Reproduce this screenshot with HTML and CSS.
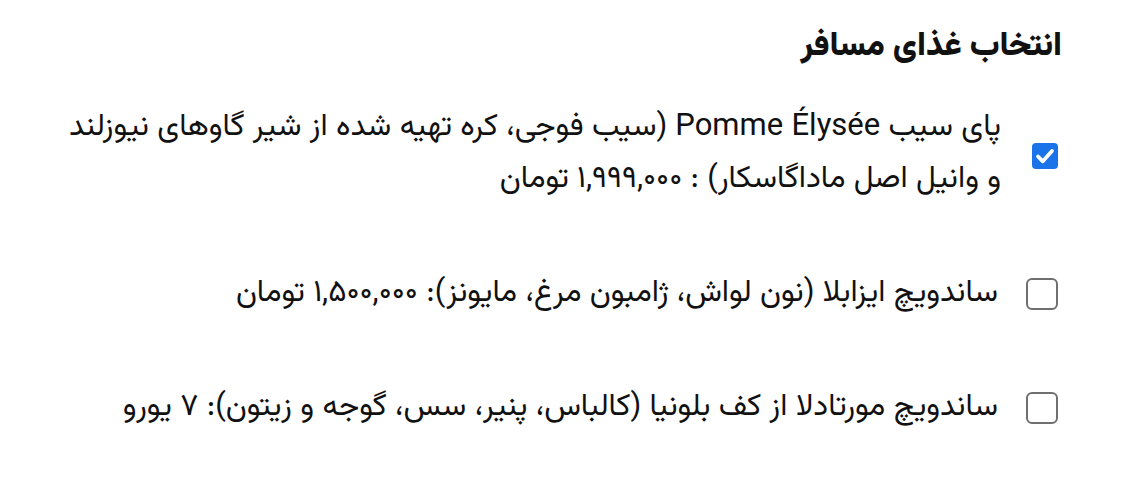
FILE: index.html
```html
<!DOCTYPE html>
<html lang="fa" dir="rtl">
<head>
<meta charset="utf-8">
<title>انتخاب غذای مسافر</title>
<link rel="stylesheet" href="styles.css">
</head>
<body>
<main class="page">
  <h1 class="title">انتخاب غذای مسافر</h1>
  <ul class="options">
    <li class="option">
      <span class="box box-checked">
        <svg viewBox="0 0 26 26" width="26" height="26"><path d="M6 13.5 L10.8 18.3 L20 8" fill="none" stroke="#fff" stroke-width="3.8" stroke-linecap="round" stroke-linejoin="round"/></svg>
      </span>
      <span class="label label-first">پای سیب Pomme Élysée (سیب فوجی، کره تهیه شده از شیر گاوهای نیوزلند و وانیل اصل ماداگاسکار) : ۱,۹۹۹,۰۰۰ تومان</span>
    </li>
    <li class="option">
      <span class="box"></span>
      <span class="label">ساندویچ ایزابلا (نون لواش، ژامبون مرغ، مایونز): ۱,۵۰۰,۰۰۰ تومان</span>
    </li>
    <li class="option">
      <span class="box"></span>
      <span class="label">ساندویچ مورتادلا از کف بلونیا (کالباس، پنیر، سس، گوجه و زیتون): ۷ یورو</span>
    </li>
  </ul>
</main>
</body>
</html>
```
FILE: styles.css
```css
html, body {
  margin: 0;
  padding: 0;
  background: #fff;
}
body {
  font-family: "Vazirmatn", "Noto Sans Arabic", "Noto Naskh Arabic", "DejaVu Sans", sans-serif;
  color: #111;
}
.page {
  padding: 21px 60px 0 60px;
}
.title {
  margin: 0;
  font-size: 33px;
  font-weight: 900;
  line-height: 52px;
}
.options {
  list-style: none;
  margin: 29px 0 0 0;
  padding: 0;
  display: flex;
  flex-direction: column;
  gap: 62px;
}
.option {
  display: flex;
  align-items: center;
  gap: 28px;
}
.box {
  flex: 0 0 auto;
  width: 32px;
  height: 32px;
  border: 2px solid #6f6f6f;
  border-radius: 6px;
  box-sizing: border-box;
  margin-right: 4px;
}
.box-checked {
  width: 26px;
  height: 26px;
  border: none;
  background: #1a73e8;
  border-radius: 4px;
  display: flex;
  align-items: center;
  justify-content: center;
  margin-right: 4px;
  margin-left: 3px;
  margin-top: 4px;
}
.box-checked svg { display: block; }
.label {
  font-size: 31px;
  line-height: 52px;
  max-width: 940px;
}
```
